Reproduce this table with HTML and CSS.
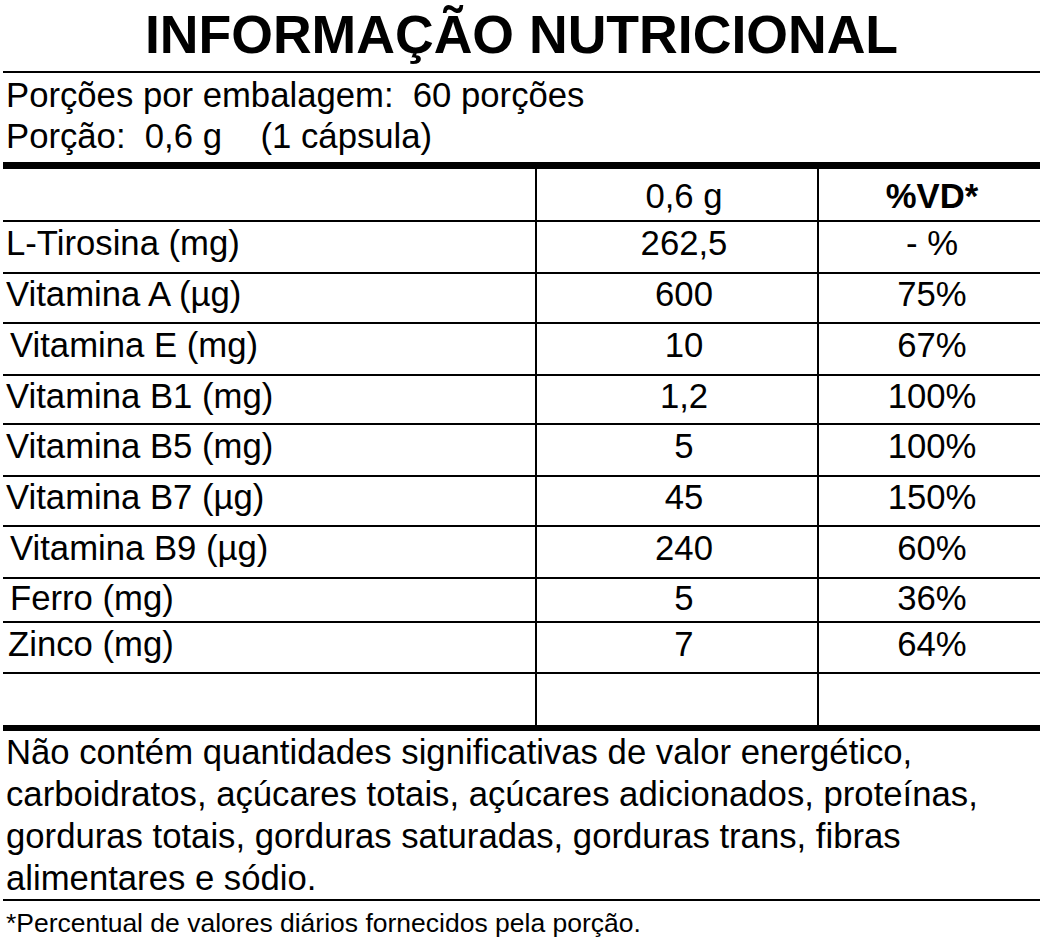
FILE: index.html
```html
<!DOCTYPE html>
<html lang="pt-BR">
<head>
<meta charset="utf-8">
<title>Informação Nutricional</title>
<link rel="stylesheet" href="styles.css">
</head>
<body>
<div class="label">
  <h1 class="title">INFORMAÇÃO NUTRICIONAL</h1>
  <div class="info">
    <div>Porções por embalagem:&nbsp; 60 porções</div>
    <div>Porção:&nbsp; 0,6 g&nbsp;&nbsp;&nbsp; (1 cápsula)</div>
  </div>
  <div class="table">
    <div class="row head">
      <div class="cell name"></div>
      <div class="cell qty">0,6 g</div>
      <div class="cell vd bold">%VD*</div>
    </div>
    <div class="row">
      <div class="cell name">L-Tirosina (mg)</div>
      <div class="cell qty">262,5</div>
      <div class="cell vd">- %</div>
    </div>
    <div class="row">
      <div class="cell name">Vitamina A (µg)</div>
      <div class="cell qty">600</div>
      <div class="cell vd">75%</div>
    </div>
    <div class="row">
      <div class="cell name in">Vitamina E (mg)</div>
      <div class="cell qty">10</div>
      <div class="cell vd">67%</div>
    </div>
    <div class="row">
      <div class="cell name">Vitamina B1 (mg)</div>
      <div class="cell qty">1,2</div>
      <div class="cell vd">100%</div>
    </div>
    <div class="row">
      <div class="cell name">Vitamina B5 (mg)</div>
      <div class="cell qty">5</div>
      <div class="cell vd">100%</div>
    </div>
    <div class="row">
      <div class="cell name">Vitamina B7 (µg)</div>
      <div class="cell qty">45</div>
      <div class="cell vd">150%</div>
    </div>
    <div class="row">
      <div class="cell name in">Vitamina B9 (µg)</div>
      <div class="cell qty">240</div>
      <div class="cell vd">60%</div>
    </div>
    <div class="row">
      <div class="cell name in">Ferro (mg)</div>
      <div class="cell qty">5</div>
      <div class="cell vd">36%</div>
    </div>
    <div class="row">
      <div class="cell name in-s">Zinco (mg)</div>
      <div class="cell qty">7</div>
      <div class="cell vd">64%</div>
    </div>
    <div class="row empty">
      <div class="cell name"></div>
      <div class="cell qty"></div>
      <div class="cell vd"></div>
    </div>
  </div>
  <p class="note">Não contém quantidades significativas de valor energético, carboidratos, açúcares totais, açúcares adicionados, proteínas, gorduras totais, gorduras saturadas, gorduras trans, fibras alimentares e sódio.</p>
  <p class="foot">*Percentual de valores diários fornecidos pela porção.</p>
</div>
</body>
</html>
```

FILE: styles.css
```css
* { box-sizing: border-box; }

html, body {
  margin: 0;
  padding: 0;
  background: #ffffff;
}

body {
  font-family: "Liberation Sans", Arial, sans-serif;
  color: #000;
}

.label {
  width: 1037px;
  margin-left: 3px;
}

.title {
  margin: 0;
  padding: 8px 0 10px;
  font-size: 53.6px;
  line-height: 53px;
  font-weight: bold;
  text-align: center;
  border-bottom: 2px solid #000;
}

.info {
  padding: 2px 0 5px 3px;
  font-size: 34.7px;
  line-height: 41px;
}

.table {
  border-top: 7px solid #000;
  border-bottom: 6px solid #000;
}

.row {
  display: grid;
  grid-template-columns: 534px 282px 1fr;
  height: 52px;
  border-bottom: 2px solid #000;
  font-size: 34.7px;
}

.row:last-child { border-bottom: none; }

.row.head { height: 53px; }
.row:nth-child(3) { height: 50px; }
.row:nth-child(5) { height: 49px; }
.row:nth-child(7) { height: 50px; }
.row:nth-child(9) { height: 44px; }
.row:nth-child(10) { height: 51px; }
.row.empty { height: 51px; }

.cell {
  display: flex;
  align-items: center;
  padding-bottom: 7px;
  line-height: 39px;
  white-space: nowrap;
}

.head .cell {
  padding-top: 4px;
  padding-bottom: 0;
}

.name {
  padding-left: 3px;
  border-right: 2px solid #000;
}

.name.in { padding-left: 7px; }
.name.in-s { padding-left: 5px; }

.qty {
  justify-content: center;
  padding-left: 14px;
  border-right: 2px solid #000;
}

.vd {
  justify-content: center;
  padding-left: 5px;
}

.bold { font-weight: bold; }

.note {
  margin: 0;
  padding: 0 0 0 3px;
  font-size: 34.7px;
  line-height: 42px;
  border-bottom: 2px solid #000;
}

.foot {
  margin: 0;
  padding: 7px 0 0 3px;
  font-size: 26.5px;
  line-height: 30px;
}
```
